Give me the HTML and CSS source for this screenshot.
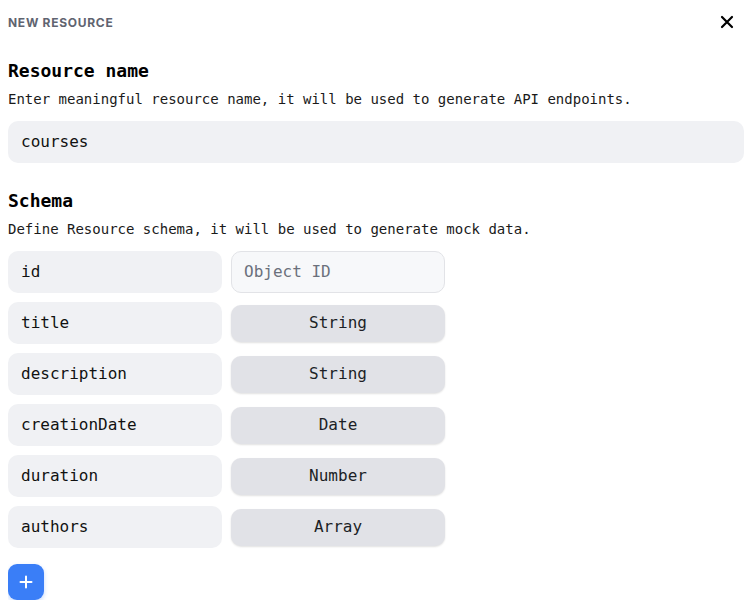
FILE: index.html
```html
<!DOCTYPE html>
<html>
<head>
<meta charset="utf-8">
<link rel="stylesheet" href="styles.css">
</head>
<body>
<div class="panel">
  <div class="header">
    <span class="title">New resource</span>
    <button class="close" aria-label="Close">
      <svg width="14" height="14" viewBox="0 0 14 14"><path d="M2 2L12 12M12 2L2 12" stroke="#000" stroke-width="2.2" stroke-linecap="round"/></svg>
    </button>
  </div>

  <h2 class="heading first">Resource name</h2>
  <p class="desc">Enter meaningful resource name, it will be used to generate API endpoints.</p>
  <div class="field wide">courses</div>

  <h2 class="heading">Schema</h2>
  <p class="desc">Define Resource schema, it will be used to generate mock data.</p>

  <div class="schema">
    <div class="field">id</div>
    <div class="cell"><div class="idbox">Object ID</div></div>
    <div class="field">title</div>
    <div class="cell"><div class="select">String</div></div>
    <div class="field">description</div>
    <div class="cell"><div class="select">String</div></div>
    <div class="field">creationDate</div>
    <div class="cell"><div class="select">Date</div></div>
    <div class="field">duration</div>
    <div class="cell"><div class="select">Number</div></div>
    <div class="field">authors</div>
    <div class="cell"><div class="select">Array</div></div>
  </div>

  <button class="add" aria-label="Add field">
    <svg width="14" height="14" viewBox="0 0 14 14"><path d="M7 1.5V12.5M1.5 7H12.5" stroke="#fff" stroke-width="2" stroke-linecap="round"/></svg>
  </button>
</div>
</body>
</html>
```

FILE: styles.css
```css
* { box-sizing: border-box; }
body {
  margin: 8px;
  background: #fff;
  font-family: "DejaVu Sans Mono", "Liberation Mono", monospace;
  color: #111;
}
.panel { display: flex; flex-direction: column; align-items: flex-start; }
.header {
  width: 100%;
  height: 28px;
  display: flex;
  align-items: center;
  justify-content: space-between;
}
.title {
  font-family: Inter, "Noto Sans", sans-serif;
  font-size: 12px;
  font-weight: 700;
  text-transform: uppercase;
  letter-spacing: 0.06em;
  color: #5f6470;
}
.close {
  border: none;
  background: none;
  padding: 0;
  margin-right: 12px;
  width: 14px;
  height: 14px;
  display: flex;
  align-items: center;
  justify-content: center;
}
.heading {
  margin: 26px 0 0 0;
  font-size: 18px;
  line-height: 24px;
  font-weight: 700;
  color: #000;
}
.heading.first { margin-top: 23px; }
.desc {
  margin: 6px 0 12px 0;
  font-size: 14px;
  line-height: 20px;
  color: #1a1a1a;
}
.field {
  height: 42px;
  border-radius: 10px;
  background: #f0f1f4;
  display: flex;
  align-items: center;
  padding: 0 13px 2px 13px;
  font-size: 16px;
  color: #111;
}
.field.wide { width: 736px; }
.schema {
  display: grid;
  grid-template-columns: 214px 214px;
  column-gap: 9px;
  row-gap: 9px;
}
.cell { display: flex; align-items: center; }
.idbox {
  width: 100%;
  height: 42px;
  border-radius: 10px;
  background: #f7f8fa;
  border: 1px solid #e2e3e7;
  display: flex;
  align-items: center;
  padding: 0 12px 2px 12px;
  font-size: 16px;
  color: #6b707c;
}
.select {
  width: 100%;
  height: 37px;
  margin-top: 1px;
  border-radius: 10px;
  background: #e1e2e7;
  box-shadow: 0 1px 2px rgba(0,0,0,0.12);
  display: flex;
  align-items: center;
  justify-content: center;
  padding-bottom: 2px;
  font-size: 16px;
  color: #1c1f26;
}
.add {
  margin-top: 16px;
  width: 36px;
  height: 36px;
  border: none;
  border-radius: 9px;
  background: #3a7ef7;
  box-shadow: 0 2px 4px rgba(58,126,247,0.3);
  display: flex;
  align-items: center;
  justify-content: center;
  padding: 0;
}
```
